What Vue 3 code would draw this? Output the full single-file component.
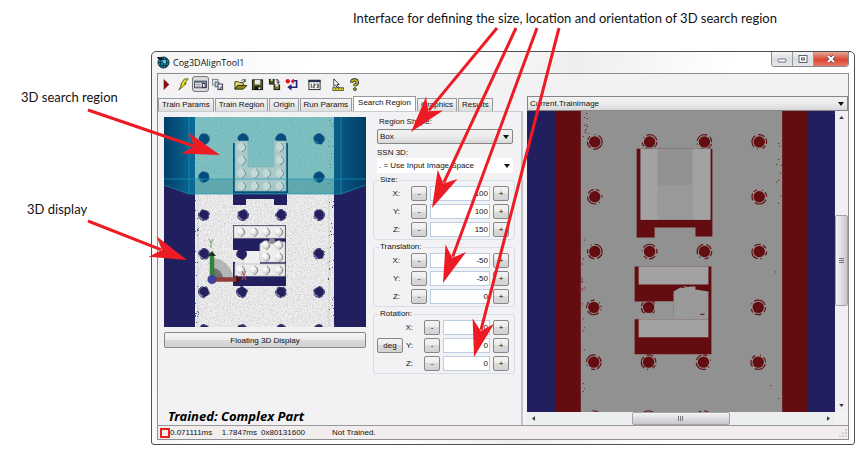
<script setup>
import { reactive, ref } from 'vue'

const tabs = ['Train Params', 'Train Region', 'Origin', 'Run Params', 'Search Region', 'Graphics', 'Results']
const activeTab = ref('Search Region')
const shape = ref('Box')
const space = ref('. = Use Input Image Space')

const groups = reactive([
  { name: 'Size', step: 10, rows: [{ axis: 'X', value: 100 }, { axis: 'Y', value: 100 }, { axis: 'Z', value: 150 }] },
  { name: 'Translation', step: 10, rows: [{ axis: 'X', value: -50 }, { axis: 'Y', value: -50 }, { axis: 'Z', value: 0 }] },
  { name: 'Rotation', step: 1, unit: 'deg', rows: [{ axis: 'X', value: 0 }, { axis: 'Y', value: 0 }, { axis: 'Z', value: 0 }] },
])

// Callout arrows: start point and tip
const arrows = [
  [497, 28, 411, 132],
  [516, 28, 432, 208],
  [537, 28, 443, 283],
  [559, 28, 474, 357],
  [88, 110, 220, 155],
  [88, 221, 187, 260],
].map(([x1, y1, x2, y2]) => {
  const d = Math.hypot(x2 - x1, y2 - y1)
  const ux = (x2 - x1) / d
  const uy = (y2 - y1) / d
  const at = (back, side) => [x2 - ux * back - uy * side, y2 - uy * back + ux * side].map(n => n.toFixed(1)).join(',')
  const [ex, ey] = at(28, 0).split(',')
  return { x1, y1, ex, ey, head: [at(0, 0), at(37, 11), at(27, 0), at(37, -11)].join(' ') }
})

const sceneHoles = [
  [204, 139], [243, 139], [281, 139], [319, 139],
  [204, 177], [319, 177],
  [204, 215], [243, 215], [281, 215], [319, 215],
  [204, 254], [242, 254], [319, 254],
  [204, 292], [242, 292], [281, 292], [319, 292],
  [204, 330], [242, 330], [281, 330], [319, 330],
]
const studs = [
  [242, 147], [242, 160], [242, 173], [242, 186],
  [280, 147], [280, 160], [280, 173], [280, 186],
  [255, 173], [267, 173], [255, 186], [267, 186],
  [241, 232], [254, 232], [266, 232], [279, 232],
  [266, 245], [279, 245], [266, 257], [279, 257],
  [241, 270], [254, 270], [266, 270], [279, 270],
]
const imageHoles = [
  [595, 142], [650, 142], [705, 142], [760, 142],
  [595, 197], [760, 197],
  [595, 252], [650, 252], [705, 252], [760, 252],
  [594, 308], [649, 308], [759, 308],
  [594, 363], [649, 363], [704, 363], [759, 363],
  [594, 419], [649, 419], [704, 419],
]

// Stray range pixels scattered along the plate edges
let seed = 7
const rand = () => (seed = (seed * 16807) % 2147483647) / 2147483647
const imageSpecks = [
  ...Array.from({ length: 12 }, () => [583 + rand() * 5, 112 + rand() * 26]),
  ...Array.from({ length: 18 }, () => [581 + rand() * 3, 230 + rand() * 175]),
  ...Array.from({ length: 10 }, () => [775 + rand() * 7, 113 + rand() * 130]),
  [771, 386], [779, 399], [776, 272],
].map(p => p.map(Math.round))
const sceneSpecks = [
  ...Array.from({ length: 24 }, () => [195 + rand() * 3, 200 + rand() * 126]),
  ...Array.from({ length: 44 }, () => [328 + rand() * 6, 118 + rand() * 208]),
].map(p => p.map(Math.round))
</script>

<template>
  <div class="page">
    <p class="headline">Interface for defining the size, location and orientation of 3D search region</p>
    <div class="body">
      <aside class="notes">
        <p class="note">3D search region</p>
        <p class="note">3D display</p>
      </aside>

      <main class="window">
        <header class="titlebar">
          <svg class="app-icon" viewBox="0 0 13 13" width="13" height="13" aria-hidden="true">
            <circle cx="6.500" cy="6.500" r="5.500" fill="#1c86a8" stroke="#12303c" />
            <path d="M1 6.500H12M2 3.500H11M2 9.500H11M6.500 1V12M4.500 1.500Q2 6.500 4.500 11.500M8.500 1.500Q11 6.500 8.500 11.500" fill="none" stroke="#06313f" stroke-width=".8" />
            <path d="M0 1H4L6 3L4 4L1 3Z" fill="#101820" />
            <path d="M6 4H9V7H6Z" fill="#5ec4de" />
          </svg>
          <h1>Cog3DAlignTool1</h1>
          <div class="window-buttons">
            <button type="button" aria-label="Minimize">
              <svg viewBox="0 0 12 10" width="12" height="10"><rect x="2" y="5" width="8" height="3" rx="1" fill="#fff" stroke="#6a7080" /></svg>
            </button>
            <button type="button" aria-label="Maximize">
              <svg viewBox="0 0 12 10" width="12" height="10"><rect x="2" y="1.500" width="8" height="7" fill="#fff" stroke="#5d6374" /><rect x="4.500" y="4" width="3" height="2" fill="#ddd" stroke="#5d6374" /></svg>
            </button>
            <button type="button" class="close" aria-label="Close">
              <svg viewBox="0 0 12 10" width="12" height="10"><path d="M3 2L9 8M9 2L3 8" stroke="#5b3b40" stroke-width="3.600" /><path d="M3 2L9 8M9 2L3 8" stroke="#fff" stroke-width="2.200" /></svg>
            </button>
          </div>
        </header>

        <div class="client">
          <div class="toolbar" role="toolbar">
            <button type="button" aria-label="Run">
              <svg viewBox="0 0 14 14"><path d="M4 1L10 7L4 13Z" fill="#8a0f14" /></svg>
            </button>
            <button type="button" aria-label="Electric run">
              <svg viewBox="0 0 14 14"><path d="M8 1H12L8 6H10L2 13L5 7H4Z" fill="#f0e020" stroke="#4a4a10" stroke-width=".9" /></svg>
            </button>
            <button type="button" class="pressed" aria-label="Show local display">
              <svg viewBox="0 0 14 14"><rect x="0.500" y="3.500" width="13" height="7" fill="#d8dce4" stroke="#445" /><rect x="0" y="3" width="14" height="2" fill="#54657c" /><path d="M2 7H7M2 9H7" stroke="#99a" /><rect x="9" y="6" width="3" height="4" fill="#fff" stroke="#223" /></svg>
            </button>
            <button type="button" aria-label="Floating displays">
              <svg viewBox="0 0 14 14"><rect x="1.500" y="1.500" width="6" height="6" fill="#dde" stroke="#788" /><rect x="4.500" y="4.500" width="4" height="5" fill="#cdd5e4" stroke="#566" /><rect x="7.500" y="6.500" width="5" height="6" fill="#eef" stroke="#334" /><path d="M11 9V11H9" stroke="#334" fill="none" /></svg>
            </button>
            <i></i>
            <button type="button" aria-label="Open">
              <svg viewBox="0 0 14 14"><path d="M1 12V4H5L6 5H10V8H4L1 12" fill="#e8e070" stroke="#333310" /><path d="M4 8H14L10 12H1Z" fill="#8c8620" stroke="#333310" /><path d="M8 3Q10 0 12 3M12 1V4H10" stroke="#222" fill="none" stroke-width=".9" /></svg>
            </button>
            <button type="button" aria-label="Save">
              <svg viewBox="0 0 14 14"><rect x="1.500" y="2" width="11" height="10.500" fill="#55560f" stroke="#111" /><rect x="4" y="2" width="6" height="5" fill="#e6e6e6" /><rect x="4" y="9" width="6" height="4" fill="#111" /><rect x="8" y="10" width="2" height="2" fill="#eee" /></svg>
            </button>
            <button type="button" aria-label="Save as">
              <svg viewBox="0 0 14 14"><rect x="1.500" y="1.500" width="5" height="5" fill="#55560f" stroke="#111" /><rect x="3" y="1" width="2" height="2" fill="#eee" /><rect x="6.500" y="7.500" width="6" height="5" fill="#77761f" stroke="#111" /><rect x="8" y="7" width="3" height="2" fill="#eee" /><path d="M8 2H11V5M9.500 4L11 6L12.500 4" stroke="#222" fill="none" /></svg>
            </button>
            <button type="button" aria-label="Reset">
              <svg viewBox="0 0 14 14"><circle cx="3" cy="3.500" r="2.300" fill="#e0101c" /><path d="M9 3H12.500V10H5" fill="none" stroke="#20246c" stroke-width="1.800" /><path d="M7 6.500L2.500 10L7 13.500Z" fill="#20246c" /><path d="M6 3.500L9.500 .5V6.500Z" fill="#e0101c" /></svg>
            </button>
            <i></i>
            <button type="button" aria-label="Show values">
              <svg viewBox="0 0 14 14"><rect x="1" y="2.500" width="12" height="10" fill="#fff" stroke="#222" /><rect x="0.500" y="2" width="13" height="2.500" fill="#26324c" /><path d="M3.500 6V11M5.500 6.500H7.500V8.500H5.500V10.500H7.500M9 6.500H11V10.500H9M9.500 8.500H11" stroke="#222" fill="none" stroke-width=".9" /></svg>
            </button>
            <i></i>
            <button type="button" aria-label="Pointer">
              <svg viewBox="0 0 14 14"><path d="M3 1V9L5 7.500L7 10.500L8 9.500L6.500 7H9Z" fill="#fff" stroke="#222" stroke-width=".9" /><rect x="2" y="10.500" width="11.500" height="3" fill="#e8d820" stroke="#333" stroke-width=".8" /><path d="M5 11V12M8 11V12M11 11V12" stroke="#333" /></svg>
            </button>
            <button type="button" aria-label="Help">
              <svg viewBox="0 0 14 14"><path d="M4 5Q4 2 7 2Q10 2 10 5Q10 6.500 7.500 7.500V9" fill="none" stroke="#222" stroke-width="3.400" /><path d="M4 4.500Q4 2 7 2Q10 2 10 5Q10 6.500 7.500 7.500V9" fill="none" stroke="#d8c820" stroke-width="1.500" /><circle cx="7.500" cy="12" r="1.500" fill="#d8c820" stroke="#222" /></svg>
            </button>
          </div>

          <div class="split">
            <section class="editor">
              <nav class="tabs" role="tablist">
                <button v-for="t in tabs" :key="t" type="button" role="tab" :class="{ active: t === activeTab }" :aria-selected="t === activeTab" @click="activeTab = t">{{ t }}</button>
              </nav>
              <div class="pane">
                <div class="columns">
                  <div class="preview">
                    <svg class="scene" viewBox="164 117 202 210" preserveAspectRatio="xMidYMid slice" role="img" aria-label="3D display">
                      <defs>
                        <filter id="grain" x="0" y="0" width="100%" height="100%">
                          <feTurbulence type="fractalNoise" baseFrequency=".7" numOctaves="2" seed="4" />
                          <feColorMatrix values="0 0 0 0 .45  0 0 0 0 .45  0 0 0 0 .47  1.400 0 0 0 -.58" />
                        </filter>
                        <linearGradient id="leftWall"><stop offset="0" stop-color="#003f68" /><stop offset="1" stop-color="#0a6c98" /></linearGradient>
                        <linearGradient id="rightWall"><stop offset="0" stop-color="#0a5f8c" /><stop offset="1" stop-color="#003c64" /></linearGradient>
                        <radialGradient id="stud" cx=".35" cy=".35"><stop offset="0" stop-color="#fff" /><stop offset=".7" stop-color="#e8e8e8" /><stop offset="1" stop-color="#d0d0d0" /></radialGradient>
                      </defs>
                      <rect x="164" y="117" width="202" height="210" fill="#221f5f" />
                      <rect x="195" y="117" width="139" height="210" fill="#efeff0" />
                      <rect x="195" y="117" width="139" height="210" filter="url(#grain)" />
                      <path d="M198 195V327M329 195V327" stroke="#d2d2d6" />
                      <rect v-for="(p, i) in sceneSpecks" :key="'s' + i" :x="p[0]" :y="p[1]" width="1" height="1" fill="#55547c" />
                      <g fill="#24205f">
                        <template v-for="(p, i) in sceneHoles" :key="'h' + i">
                          <circle :cx="p[0]" :cy="p[1]" r="4.900" />
                          <circle :cx="p[0]" :cy="p[1]" r="5.400" fill="none" stroke="#24205f" stroke-dasharray="11 2 3 4 5 1" :stroke-dashoffset="i * 3" />
                          <path :d="`M${p[0] - 5} ${p[1] + 1}Q${p[0] - 3} ${p[1] + 4} ${p[0] - 1} ${p[1] + 4}`" fill="none" stroke="#8f8faa" stroke-width="1.200" />
                        </template>
                      </g>
                      <path d="M234 143H236V191H286V143H287V205H274V199H246V205H233V193H234Z" fill="#221f5f" />
                      <path d="M233 225H286V286H233V262H235V264H246V250H233Z" fill="#221f5f" />
                      <path d="M245 251H260V245L262 243H285V262H260V264H245Z" fill="#efefef" />
                      <circle cx="242" cy="254" r="5" fill="#24205f" />
                      <g fill="#ececec" stroke="#c2c2c6" stroke-width=".8">
                        <rect x="234" y="226" width="51" height="12" />
                        <path d="M260 244L263 242H285V262H260Z" />
                        <rect x="235" y="264" width="50" height="12" />
                      </g>
                      <g v-for="(p, i) in studs.slice(12)" :key="'t' + i">
                        <circle :cx="p[0]" :cy="p[1]" r="4.400" fill="url(#stud)" />
                        <path :d="`M${p[0] + 1} ${p[1] - 4}Q${p[0] + 7} ${p[1] + 1} ${p[0]} ${p[1] + 5}`" fill="none" stroke="#85858a" />
                      </g>
                      <circle cx="272" cy="241" r="3" fill="#8d8d90" />
                      <path d="M195 117H334V194H195Z" fill="#36a3a5" fill-opacity=".6" />
                      <path d="M195 179H334V194H195Z" fill="#0a6a7d" fill-opacity=".26" />
                      <path d="M234 143V192H287V143" fill="none" stroke="#00557c" stroke-width="2" />
                      <g fill="#044d7e">
                        <template v-for="(p, i) in sceneHoles.slice(0, 6)" :key="'c' + i">
                          <circle :cx="p[0]" :cy="p[1]" r="5.200" />
                          <path :d="`M${p[0] - 5} ${p[1] + 1}Q${p[0] - 3} ${p[1] + 4} ${p[0] - 1} ${p[1] + 4}`" fill="none" stroke="#4f96a4" />
                        </template>
                      </g>
                      <path d="M235 141H248V167H274V141H286V191H235Z" fill="#a9c9c8" stroke="#86b3b4" stroke-width=".6" />
                      <g v-for="(p, i) in studs.slice(0, 12)" :key="'u' + i">
                        <circle :cx="p[0]" :cy="p[1]" r="4.400" fill="#c3d9d8" />
                        <path :d="`M${p[0] + 1} ${p[1] - 4}Q${p[0] + 7} ${p[1] + 1} ${p[0]} ${p[1] + 5}`" fill="none" stroke="#64898a" />
                      </g>
                      <path d="M164 117H195V194H189L164 185Z" fill="url(#leftWall)" />
                      <path d="M334 117H366V185L341 194H334Z" fill="url(#rightWall)" />
                      <path d="M164 185L189 194H341L366 185M164 179H366M189 117V194M341 117V194" fill="none" stroke="#1498b4" stroke-width=".7" />
                      <path d="M212 279V258A21 21 0 0 1 233 279Z" fill="#6c6c6c" fill-opacity=".4" />
                      <path d="M212 279V268A11 11 0 0 1 223 279Z" fill="#444" fill-opacity=".6" />
                      <path d="M212 279V255" stroke="#2e8536" stroke-width="4.500" />
                      <path d="M208 256L212 251L216 256Z" fill="#123c18" />
                      <path d="M212 279.500H237" stroke="#8f3c3c" stroke-width="4.500" />
                      <path d="M236 275L241 279.500L236 284Z" fill="#4a1414" />
                      <circle cx="212" cy="279.500" r="4.500" fill="#40429c" />
                      <path d="M209 239L211 243L213 239M211 243V248" fill="none" stroke="#5aa667" />
                      <path d="M242 271L246 280M246 271L242 280" fill="none" stroke="#b35a5a" />
                    </svg>
                    <button type="button" class="btn wide">Floating 3D Display</button>
                  </div>

                  <form class="settings" @submit.prevent>
                    <label for="shape" class="first">Region Shape:</label>
                    <div class="combo raised">
                      <select id="shape" v-model="shape"><option>Box</option></select>
                    </div>
                    <label for="space">SSN 3D:</label>
                    <div class="combo flat">
                      <select id="space" v-model="space"><option>. = Use Input Image Space</option></select>
                    </div>
                    <fieldset v-for="g in groups" :key="g.name" :class="{ angle: g.unit }">
                      <legend>{{ g.name }}:</legend>
                      <div v-for="r in g.rows" :key="r.axis" class="axis">
                        <span class="unit"><button v-if="g.unit && r.axis === 'Y'" type="button" class="btn">{{ g.unit }}</button></span>
                        <label :for="g.name + r.axis">{{ r.axis }}:</label>
                        <button type="button" class="btn" :aria-label="`Decrease ${g.name} ${r.axis}`" @click="r.value -= g.step">-</button>
                        <input :id="g.name + r.axis" v-model.number="r.value" type="text" />
                        <button type="button" class="btn" :aria-label="`Increase ${g.name} ${r.axis}`" @click="r.value += g.step">+</button>
                      </div>
                    </fieldset>
                  </form>
                </div>
                <p class="trained">Trained: Complex Part</p>
              </div>
            </section>

            <section class="viewer">
              <div class="combo raised square">
                <select aria-label="Displayed image"><option>Current.TrainImage</option></select>
              </div>
              <div class="canvas">
                <svg class="range" viewBox="527 111 309 302" preserveAspectRatio="xMidYMid slice" role="img" aria-label="Train image">
                  <rect x="527" y="111" width="309" height="302" fill="#221f5f" />
                  <rect x="555" y="111" width="253" height="302" fill="#630d10" />
                  <rect x="581" y="111" width="202" height="302" fill="#919191" />
                  <g fill="#630d10">
                    <rect v-for="(p, i) in imageSpecks" :key="'p' + i" :x="p[0]" :y="p[1]" width="1" height="1" />
                    <template v-for="(p, i) in imageHoles" :key="'r' + i">
                      <circle :cx="p[0]" :cy="p[1]" r="5.700" />
                      <circle :cx="p[0]" :cy="p[1]" r="7.300" fill="none" stroke="#630d10" stroke-width="1.200" stroke-dasharray="13 3 7 2 4 5 1 3" :stroke-dashoffset="i * 7" />
                    </template>
                    <path d="M637 149H713V237H696V228H655V238H637Z" />
                    <path d="M635 267H712V355H635V320H674V302H635Z" />
                  </g>
                  <path d="M641 149H711V220H641Z" fill="#919191" />
                  <path d="M658 185H693V220H658Z" fill="#999" />
                  <path d="M641 149H658V220H641ZM693 149H711V220H693Z" fill="#a2a2a2" />
                  <path d="M639 267H709V285H639ZM639 320H709V338H639Z" fill="#a2a2a2" />
                  <path d="M655 302H674V320H639V314H655Z" fill="#959595" />
                  <path d="M674 302V292L679 289L684 287H696V290L709 292V320H674Z" fill="#999" />
                  <circle cx="683" cy="312" r="5" fill="none" stroke="#a0a0a0" />
                  <path d="M682 288H685M687 287H690M701 315H705" stroke="#630d10" />
                </svg>
                <div class="scroll vertical">
                  <button type="button" aria-label="Scroll up"><svg viewBox="0 0 6 4" width="5" height="3"><path d="M0 4L3 0L6 4Z" fill="#333" /></svg></button>
                  <div class="thumb"><span></span><span></span><span></span></div>
                  <button type="button" aria-label="Scroll down"><svg viewBox="0 0 6 4" width="5" height="3"><path d="M0 0L3 4L6 0Z" fill="#333" /></svg></button>
                </div>
                <div class="scroll horizontal">
                  <button type="button" aria-label="Scroll left"><svg viewBox="0 0 4 6" width="3" height="5"><path d="M4 0L0 3L4 6Z" fill="#333" /></svg></button>
                  <div class="thumb"><span></span><span></span><span></span></div>
                  <button type="button" aria-label="Scroll right"><svg viewBox="0 0 4 6" width="3" height="5"><path d="M0 0L4 3L0 6Z" fill="#333" /></svg></button>
                </div>
              </div>
            </section>
          </div>

          <footer class="status">
            <i></i>
            <span>0.071111ms</span>
            <span>1.7847ms</span>
            <span>0x80131600</span>
            <span>Not Trained.</span>
            <svg viewBox="0 0 8 8" width="8" height="8" aria-hidden="true"><path d="M6 0h2v2h-2zM3 3h2v2h-2zM6 3h2v2h-2zM0 6h2v2h-2zM3 6h2v2h-2zM6 6h2v2h-2z" fill="#d4d2d4" /></svg>
          </footer>
        </div>
      </main>
    </div>

    <svg class="callouts" viewBox="0 0 862 450" width="862" height="450" aria-hidden="true">
      <g v-for="(a, i) in arrows" :key="i">
        <line :x1="a.x1" :y1="a.y1" :x2="a.ex" :y2="a.ey" stroke="#ed1c24" stroke-width="3" />
        <polygon :points="a.head" fill="#ed1c24" />
      </g>
    </svg>
  </div>
</template>

<style>
body {
  background: #fff;
}
</style>

<style scoped>
* {
  box-sizing: border-box;
}
p,
h1 {
  margin: 0;
}
.page {
  position: relative;
  display: flex;
  flex-direction: column;
  min-height: 100vh;
  padding: 0 7px 5px 0;
  font-family: "Liberation Sans", Arial, sans-serif;
  font-size: 8px;
  line-height: 10px;
  color: #111;
}
button,
input,
select {
  font: inherit;
  color: inherit;
  margin: 0;
  padding: 0;
  min-width: 0;
}
.headline,
.note {
  font-family: Lato, "Noto Sans", sans-serif;
  font-size: 13px;
  line-height: 18px;
  color: #111;
  white-space: nowrap;
}
.headline {
  padding: 9px 0 24px 353px;
}
.body {
  flex: 1;
  display: grid;
  grid-template-columns: 151px minmax(0, 1fr);
}
.notes {
  display: flex;
  flex-direction: column;
  gap: 94px;
  padding: 37px 0 0 21px;
}
.note + .note {
  padding-left: 6px;
}
.window {
  display: flex;
  flex-direction: column;
  padding: 0 5px 4px;
  border: 1px solid #4c5052;
  border-radius: 5px 5px 3px 3px;
  background: linear-gradient(100deg, #f3f3f3, #fff 20%, #fff 40%, #eee 55%, #fff 75%);
}
.titlebar {
  display: flex;
  align-items: center;
  gap: 3px;
  height: 21px;
}
.titlebar h1 {
  flex: 1;
  font: 9px/12px "Open Sans", "Noto Sans", sans-serif;
}
.window-buttons {
  display: flex;
  align-self: flex-start;
  height: 15px;
  border: 1px solid #85888c;
  border-top: 0;
  border-radius: 0 0 4px 4px;
  overflow: hidden;
}
.window-buttons button {
  display: grid;
  place-items: center;
  width: 21px;
  border: 0;
  border-right: 1px solid #999;
  background: linear-gradient(#f4f4f5, #dcdde0 50%, #e6e7ea);
}
.window-buttons .close {
  width: 34px;
  border: 0;
  background: linear-gradient(#e9a596, #d8503a 50%, #df4a36 60%, #e87a64);
}
.client {
  flex: 1;
  display: flex;
  flex-direction: column;
  border: 1px solid #8b8d8e;
  background: #f2f2f4;
}
.toolbar {
  display: flex;
  align-items: center;
  height: 22px;
  padding-bottom: 2px;
}
.toolbar button {
  display: grid;
  place-items: center;
  width: 17px;
  height: 16px;
  border: 0;
  background: none;
}
.toolbar svg {
  width: 13px;
  height: 13px;
}
.toolbar .pressed {
  border: 1px solid #777;
  border-radius: 3px;
  background: #dcdcde;
}
.toolbar i {
  width: 6px;
}
.split {
  flex: 1;
  display: grid;
  grid-template-columns: 365px minmax(0, 1fr);
  gap: 4px;
}
.editor {
  display: flex;
  flex-direction: column;
}
.tabs {
  display: flex;
  align-items: flex-end;
  gap: 1px;
  height: 15px;
}
.tabs button {
  height: 13px;
  padding: 0 3px;
  border: 1px solid #989a9e;
  border-bottom: 0;
  background: linear-gradient(#f4f4f4, #dedee0);
  white-space: nowrap;
}
.tabs .active {
  height: 15px;
  padding: 0 4px 2px;
  background: #fff;
}
.pane {
  flex: 1;
  display: flex;
  flex-direction: column;
  justify-content: space-between;
  border-top: 1px solid #c9cacd;
  border-right: 2px solid #c2c4c8;
}
.columns {
  display: flex;
  gap: 7px;
  padding: 5px 6px 0;
}
.preview {
  flex: 1;
  display: flex;
  flex-direction: column;
  gap: 5px;
}
.scene {
  display: block;
  width: 100%;
  height: 210px;
}
.btn {
  border: 1px solid #868686;
  border-radius: 2px;
  background: linear-gradient(#f4f4f4, #ebebeb 50%, #dadada 50%, #d2d2d2);
  line-height: 11px;
}
.wide {
  height: 16px;
}
.settings {
  width: 142px;
  display: flex;
  flex-direction: column;
}
.settings > label {
  padding: 4px 0 0 4px;
}
.settings > .first {
  padding: 0 0 2px 6px;
}
.combo {
  position: relative;
  height: 15px;
}
.settings .combo {
  margin: 0 2px 0 4px;
}
.combo select {
  display: block;
  width: 100%;
  height: 100%;
  padding: 0 12px 0 2px;
  border: 0;
  appearance: none;
  background: none;
}
.combo::after {
  content: "";
  position: absolute;
  right: 3px;
  top: 6px;
  border: 3px solid transparent;
  border-top: 4px solid #111;
  border-bottom: 0;
  pointer-events: none;
}
.raised {
  border: 1px solid #868686;
  border-radius: 2px;
  background: linear-gradient(#f2f2f2, #ebebeb 50%, #d8d8d8);
}
.raised::after {
  top: 5px;
}
.flat {
  background: #fff;
}
.square {
  border-radius: 0;
}
fieldset {
  margin: 2px 0 0;
  padding: 1px 5px 2px;
  min-width: 0;
  border: 1px solid #d5dfe5;
  border-radius: 3px;
  display: flex;
  flex-direction: column;
  gap: 3px;
}
legend {
  margin: 0;
  padding: 0 1px;
}
.axis {
  display: grid;
  grid-template-columns: 0 26px 16px 1fr 16px;
  column-gap: 3px;
  height: 15px;
}
.angle .axis {
  grid-template-columns: 24px 15px 16px 1fr 16px;
}
.axis label {
  justify-self: end;
  padding-right: 8px;
  line-height: 15px;
}
.unit {
  display: grid;
  margin-left: -2px;
}
.axis input {
  width: 100%;
  padding-right: 1px;
  border: 1px solid #bccde6;
  background: #fff;
  text-align: right;
}
.trained {
  padding: 0 10px 0;
  font: italic 700 13px/18px "Noto Sans", "Open Sans", sans-serif;
  color: #000;
}
.viewer {
  display: flex;
  flex-direction: column;
}
.canvas {
  flex: 1;
  display: grid;
  grid-template: minmax(0, 1fr) 13px / minmax(0, 1fr) 13px;
}
.range {
  display: block;
  width: 100%;
  height: 100%;
  min-height: 0;
}
.scroll {
  display: flex;
  background: #f0f0f2;
}
.vertical {
  flex-direction: column;
}
.horizontal {
  background: #ecefef;
}
.scroll button {
  display: grid;
  place-items: center;
  width: 13px;
  height: 13px;
  border: 0;
  background: none;
}
.vertical button:first-child {
  margin-bottom: auto;
}
.thumb {
  display: flex;
  align-items: center;
  justify-content: center;
  gap: 1px;
  border: 1px solid #a4a4a8;
  border-radius: 2px;
}
.vertical .thumb {
  flex-direction: column;
  min-height: 91px;
  margin-bottom: 93px;
  background: linear-gradient(90deg, #f4f4f6, #dddde1 50%, #c6c6cc);
}
.horizontal .thumb {
  width: 32%;
  margin: 0 auto;
  background: linear-gradient(#f4f4f6, #dddde1 50%, #c6c6cc);
}
.vertical .thumb span {
  width: 5px;
  height: 1px;
  background: #777;
}
.horizontal .thumb span {
  width: 1px;
  height: 5px;
  background: #777;
}
.status {
  display: flex;
  align-items: center;
  height: 14px;
  padding: 0 1px;
  border-top: 1px solid #96989a;
  background: #f2eeee;
}
.status i {
  width: 10px;
  height: 10px;
  margin-left: 1px;
  border: 2px solid #ed1c24;
}
.status span:nth-of-type(1) {
  width: 45px;
}
.status span:nth-of-type(2) {
  width: 46px;
  padding-right: 4px;
  text-align: right;
}
.status span:nth-of-type(3) {
  width: 71px;
}
.status span:nth-of-type(4) {
  flex: 1;
}
.callouts {
  position: absolute;
  left: 0;
  top: 0;
  pointer-events: none;
}
</style>
